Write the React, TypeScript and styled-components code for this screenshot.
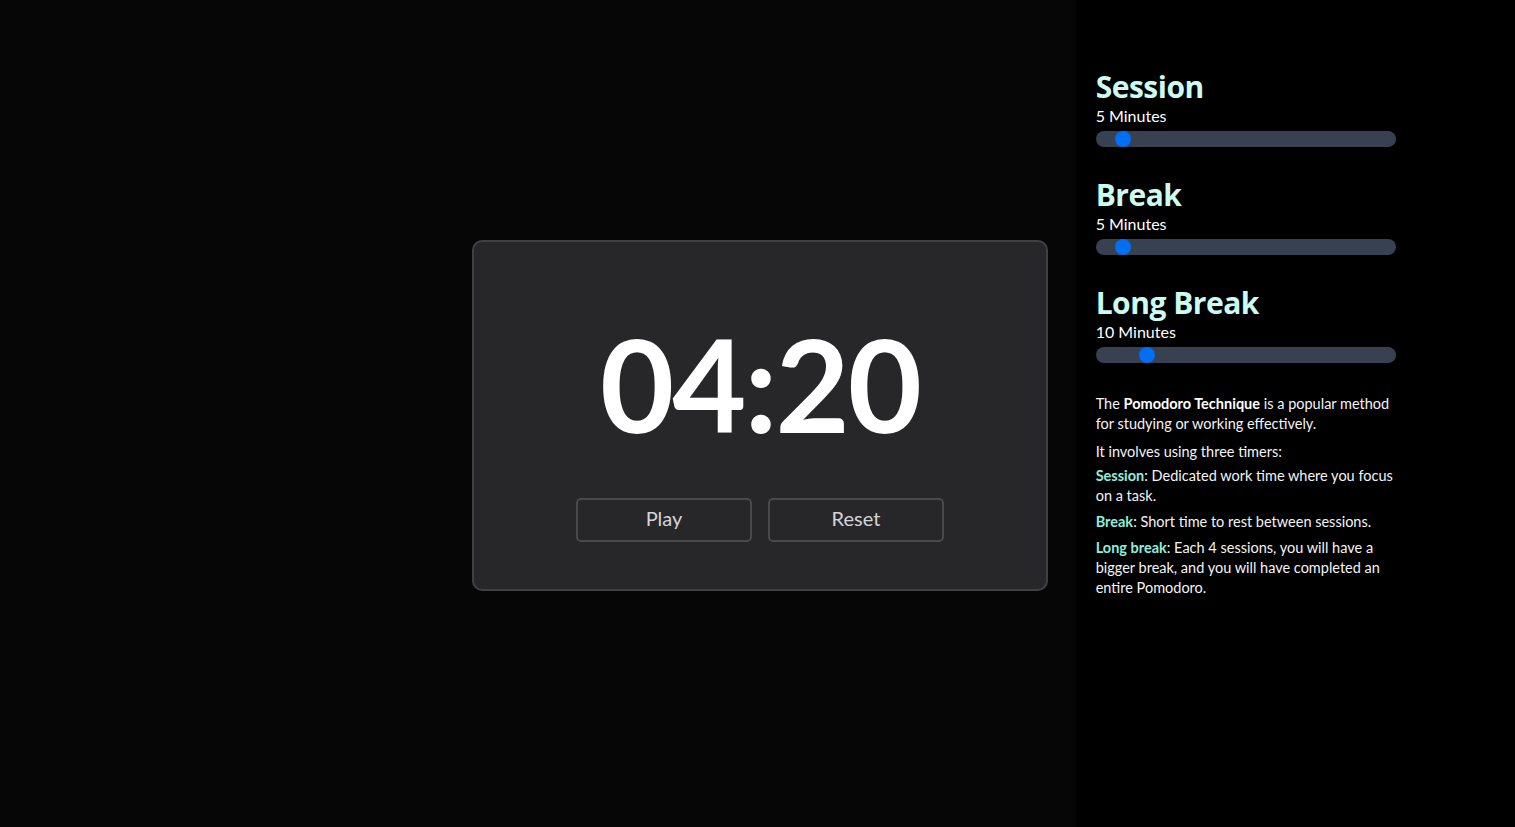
import React, { useState } from "react";
import styled, { createGlobalStyle } from "styled-components";

const Global = createGlobalStyle`
  html, body { margin: 0; padding: 0; background: #060606; }
  body { font-family: Lato, "Open Sans", sans-serif; color: #ffffff; }
  * { box-sizing: border-box; }
`;

const Page = styled.div`
  min-height: 827px;
  height: 100vh;
  display: flex;
  align-items: center;
  justify-content: center;
  padding: 4px 0 0 5px;
  background: #060606;
`;

const Card = styled.div`
  width: 576px;
  height: 351px;
  background: #27272a;
  border: 2px solid #3f3f46;
  border-radius: 10px;
  display: flex;
  flex-direction: column;
  align-items: center;
  padding: 78px 0 0;
  gap: 50px;
`;

const Timer = styled.div`
  font-family: Lato, sans-serif;
  font-weight: 700;
  font-size: 128px;
  line-height: 1;
  height: 128px;
  color: #ffffff;
  letter-spacing: -2px;
`;

const Buttons = styled.div`
  display: flex;
  gap: 16px;
`;

const Button = styled.button`
  width: 176px;
  height: 44px;
  padding: 0 0 5px;
  background: transparent;
  border: 2px solid #48484f;
  border-radius: 5px;
  color: #d4d4d8;
  font-family: Lato, sans-serif;
  font-size: 20px;
  cursor: pointer;
`;

const Aside = styled.aside`
  position: fixed;
  top: 0;
  right: 0;
  width: 29%;
  height: 100vh;
  background: #000000;
  padding: 68px 20px 20px;
  display: flex;
  flex-direction: column;
`;

const Section = styled.section`
  display: flex;
  flex-direction: column;
  margin-bottom: 29px;
`;

const Title = styled.h2`
  margin: 0;
  padding-top: 2px;
  font-family: "Open Sans", Lato, sans-serif;
  font-size: 30px;
  line-height: 34px;
  font-weight: 700;
  letter-spacing: -0.5px;
  color: #ccfbf1;
`;

const Sub = styled.div`
  font-size: 16px;
  line-height: 24px;
  color: #ffffff;
  margin-bottom: 3px;
`;

const Range = styled.input`
  -webkit-appearance: none;
  appearance: none;
  width: 300px;
  height: 16px;
  margin: 0;
  border-radius: 8px;
  background: #374151;
  outline: none;
  &::-webkit-slider-thumb {
    -webkit-appearance: none;
    appearance: none;
    width: 16px;
    height: 16px;
    border-radius: 50%;
    background: #0070f3;
    border: none;
  }
`;

const Info = styled.div`
  width: 300px;
  font-size: 14.5px;
  line-height: 20px;
  color: #f4f4f5;
  margin-top: 2px;
`;

const P = styled.p<{ $gap: number }>`
  margin: 0 0 ${(p) => p.$gap}px;
`;

const Strong = styled.b`
  font-weight: 700;
  color: #ffffff;
`;

const Hl = styled.b`
  font-weight: 700;
  color: #8eeedc;
`;

function Setting({ title, initial }: { title: string; initial: number }) {
  const [v, setV] = useState(initial);
  return (
    <Section>
      <Title>{title}</Title>
      <Sub>{v} Minutes</Sub>
      <Range
        type="range"
        min={1}
        max={60}
        value={v}
        onChange={(e) => setV(Number(e.target.value))}
      />
    </Section>
  );
}

export default function App() {
  return (
    <>
      <Global />
      <Page>
        <Card>
          <Timer>04:20</Timer>
          <Buttons>
            <Button>Play</Button>
            <Button>Reset</Button>
          </Buttons>
        </Card>
      </Page>
      <Aside>
        <Setting title="Session" initial={5} />
        <Setting title="Break" initial={5} />
        <Setting title="Long Break" initial={10} />
        <Info>
          <P $gap={8}>
            The <Strong>Pomodoro Technique</Strong> is a popular method for studying or working effectively.
          </P>
          <P $gap={4}>It involves using three timers:</P>
          <P $gap={6}>
            <Hl>Session</Hl>: Dedicated work time where you focus on a task.
          </P>
          <P $gap={6}>
            <Hl>Break</Hl>: Short time to rest between sessions.
          </P>
          <P $gap={0}>
            <Hl>Long break</Hl>: Each 4 sessions, you will have a bigger break, and you will have completed an entire Pomodoro.
          </P>
        </Info>
      </Aside>
    </>
  );
}
